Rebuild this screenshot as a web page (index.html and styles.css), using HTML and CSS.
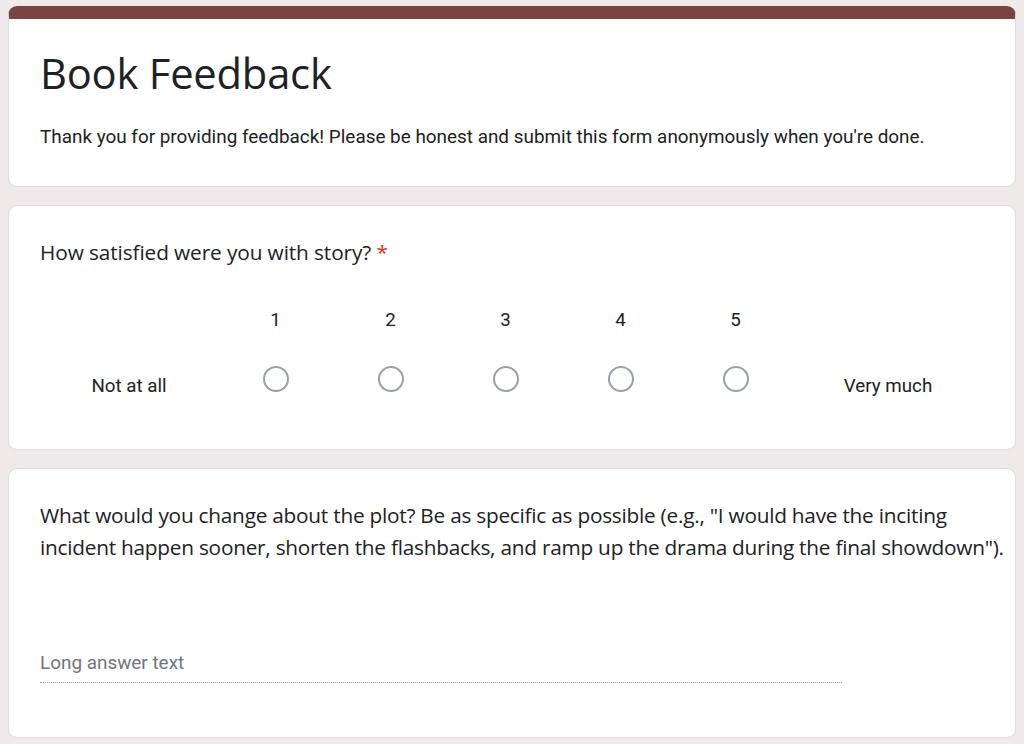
FILE: index.html
```html
<!DOCTYPE html>
<html lang="en">
<head>
<meta charset="utf-8">
<title>Book Feedback</title>
<link rel="stylesheet" href="styles.css">
</head>
<body>
<main class="form">
  <section class="card header-card">
    <h1 class="form-title">Book Feedback</h1>
    <p class="form-desc">Thank you for providing feedback! Please be honest and submit this form anonymously when you're done.</p>
  </section>

  <section class="card question-card">
    <h2 class="question">How satisfied were you with story? <span class="required">*</span></h2>
    <div class="scale">
      <div class="scale-label label-low">Not at all</div>
      <div class="scale-option"><span class="num">1</span><span class="radio"></span></div>
      <div class="scale-option"><span class="num">2</span><span class="radio"></span></div>
      <div class="scale-option"><span class="num">3</span><span class="radio"></span></div>
      <div class="scale-option"><span class="num">4</span><span class="radio"></span></div>
      <div class="scale-option"><span class="num">5</span><span class="radio"></span></div>
      <div class="scale-label label-high">Very much</div>
    </div>
  </section>

  <section class="card question-card long-card">
    <h2 class="question">What would you change about the plot? Be as specific as possible (e.g., "I would have the inciting incident happen sooner, shorten the flashbacks, and ramp up the drama during the final showdown").</h2>
    <div class="long-answer">Long answer text</div>
  </section>
</main>
</body>
</html>
```

FILE: styles.css
```css
html, body {
  margin: 0;
  padding: 0;
}
body {
  background: #f0ebea;
  font-family: Roboto, "Liberation Sans", Arial, sans-serif;
  color: #202124;
}
.form {
  padding: 6px 8px 0 8px;
  display: flex;
  flex-direction: column;
  gap: 18px;
}
.card {
  background: #fff;
  border: 1px solid #dadce0;
  border-radius: 9px;
  padding: 0 2px 0 31px;
  box-sizing: border-box;
}
.header-card {
  border-top: 13px solid #7a4442;
  height: 181px;
  padding-top: 30px;
}
.form-title {
  margin: 0;
  font-family: "Open Sans", Roboto, sans-serif;
  font-weight: 400;
  font-size: 41.7px;
  line-height: 48px;
  letter-spacing: -0.2px;
  color: #202124;
}
.form-desc {
  margin: 28px 0 0 0;
  font-size: 18.9px;
  line-height: 24px;
  color: #202124;
}
.question-card {
  height: 245px;
  padding-top: 30px;
}
.question {
  margin: 0;
  font-family: "Open Sans", Roboto, sans-serif;
  font-weight: 400;
  font-size: 20.8px;
  line-height: 32px;
  letter-spacing: -0.1px;
  color: #202124;
}
.long-card .question {
  letter-spacing: -0.24px;
}
.required {
  color: #d93025;
}
.scale {
  display: flex;
  align-items: flex-end;
  margin-top: 40px;
}
.scale-label {
  text-align: center;
  font-size: 18.75px;
  line-height: 24px;
  margin-bottom: -6px;
}
.label-low {
  width: 178px;
}
.label-high {
  width: 190px;
}
.scale-option {
  width: 115px;
  display: flex;
  flex-direction: column;
  align-items: center;
}
.num {
  font-size: 18.75px;
  line-height: 24px;
  height: 24px;
}
.radio {
  margin-top: 34px;
  width: 22px;
  height: 22px;
  border: 2px solid #9aa0a6;
  border-radius: 50%;
  display: block;
}
.long-card {
  height: 270px;
  padding-top: 30px;
}
.long-answer {
  margin-top: 88px;
  width: 802px;
  font-size: 18.9px;
  line-height: 24px;
  color: #70757a;
  padding-bottom: 7px;
  border-bottom: 1px dotted #9aa0a6;
}
```
